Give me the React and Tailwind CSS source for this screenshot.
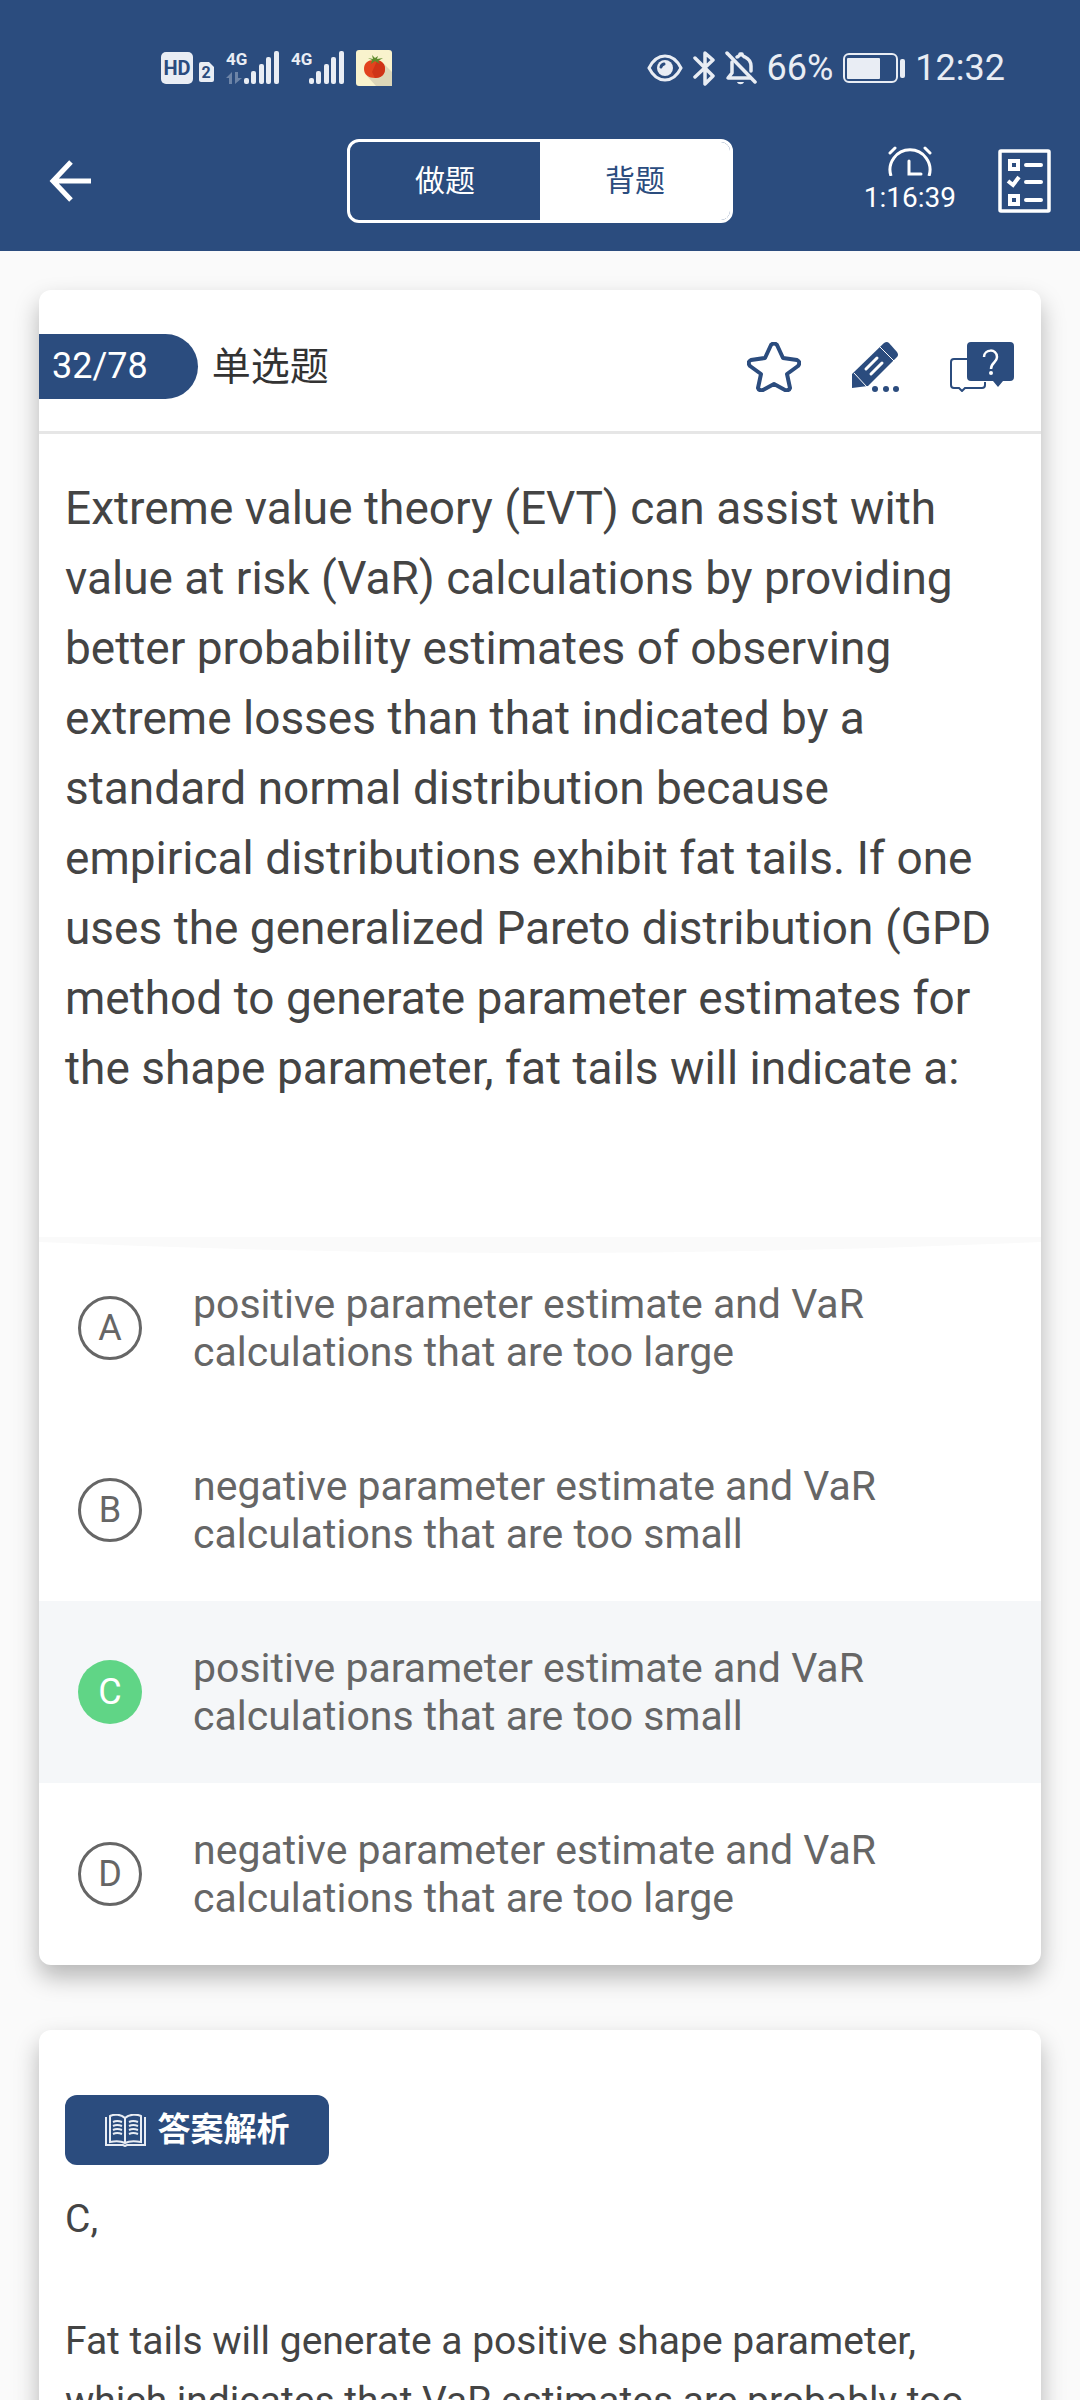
import React, { useState } from 'react'
import clsx from 'clsx'

// ─── Data ────────────────────────────────────────────────────────────────────

const MODES = ['做题', '背题']

const QUESTION = {
  index: 32,
  total: 78,
  type: '单选题',
  text: 'Extreme value theory (EVT) can assist with value at risk (VaR) calculations by providing better probability estimates of observing extreme losses than that indicated by a standard normal distribution because empirical distributions exhibit fat tails. If one uses the generalized Pareto distribution (GPD method to generate parameter estimates for the shape parameter, fat tails will indicate a:',
  options: [
    { key: 'A', text: 'positive parameter estimate and VaR calculations that are too large' },
    { key: 'B', text: 'negative parameter estimate and VaR calculations that are too small' },
    { key: 'C', text: 'positive parameter estimate and VaR calculations that are too small' },
    { key: 'D', text: 'negative parameter estimate and VaR calculations that are too large' },
  ],
  answer: 'C',
  explanation: 'Fat tails will generate a positive shape parameter, which indicates that VaR estimates are probably too',
}

// ─── Status bar icons ────────────────────────────────────────────────────────

function HdIcon() {
  return (
    <svg width="53" height="36" viewBox="0 0 53 36" className="fill-[#e9edf4]">
      <rect x="0" y="2" width="32" height="32" rx="5" />
      <text x="16" y="25" textAnchor="middle" className="fill-[#2b4c7e] font-bold text-[20px]">HD</text>
      <path d="M41 12h7l5 5v13a2 2 0 0 1-2 2H40a2 2 0 0 1-2-2V14a2 2 0 0 1 2-2z" />
      <text x="45" y="28" textAnchor="middle" className="fill-[#2b4c7e] font-bold text-[16px]">2</text>
    </svg>
  )
}

function SignalIcon({ data }) {
  return (
    <svg width="53" height="36" viewBox="0 0 53 36" className="fill-[#e9edf4]">
      <text x="0" y="15" className="font-bold text-[17px]">4G</text>
      {data && <path d="M0 28l6-6v12H3v-6zM9 22h3v6h4l-7 6z" opacity=".35" />}
      <rect x="18" y="28" width="5" height="6" rx="2" />
      <rect x="25" y="21" width="5" height="13" rx="2" />
      <rect x="33" y="14" width="5" height="20" rx="2" />
      <rect x="40" y="7" width="5" height="27" rx="2" />
      <rect x="48" y="1" width="5" height="33" rx="2" />
    </svg>
  )
}

function TomatoIcon() {
  return (
    <svg width="36" height="36" viewBox="0 0 36 36">
      <rect width="36" height="36" rx="3" fill="#f9f3cd" />
      <path d="M27 13l9 9v14H20l-9-10z" fill="#dcd6b8" />
      <path d="M18 10c6-1 11 3 11 9s-4 9-10 9S8 25 8 19s4-9 10-9z" fill="#e2431e" />
      <path d="M21 11c5 0 8 3 8 8s-4 9-10 9l-3-6z" fill="#cf3317" />
      <path d="M12 8l5 1-1-4 3 3 3-2-1 3 6-1-5 3 2 3-5-3-4 3 1-4z" fill="#5f8c2c" />
    </svg>
  )
}

function EyeIcon() {
  return (
    <svg width="36" height="36" viewBox="0 0 36 36" fill="none">
      <path d="M2 18C6 10 12 6 18 6s12 4 16 12c-4 8-10 12-16 12S6 26 2 18z" stroke="#e9edf4" strokeWidth="3" />
      <circle cx="18" cy="18" r="8" fill="#e9edf4" />
      <path d="M14 17a4 4 0 0 1 3-3" stroke="#2b4c7e" strokeWidth="3" strokeLinecap="round" />
    </svg>
  )
}

function BluetoothIcon() {
  return (
    <svg width="22" height="36" viewBox="0 0 22 36" fill="none" stroke="#e9edf4" strokeWidth="3.5" strokeLinejoin="round" strokeLinecap="round">
      <path d="M2 8l18 18-8 8V3l8 7L2 27" />
    </svg>
  )
}

function BellOffIcon() {
  return (
    <svg width="32" height="36" viewBox="0 0 32 36" fill="none" stroke="#e9edf4" strokeWidth="3.5" strokeLinecap="round">
      <path d="M7 12v11l-4 5h22M12 7c2-1 3-1 3-3h2c0 2 1 2 3 3 4 2 6 5 6 9v5" strokeLinejoin="round" />
      <path d="M2 3l28 29" />
      <path d="M12 32h7c-1 3-6 3-7 0z" fill="#e9edf4" stroke="none" />
    </svg>
  )
}

function BatteryIcon() {
  return (
    <svg width="62" height="36" viewBox="0 0 62 36">
      <rect x="1" y="4" width="53" height="28" rx="5" fill="none" stroke="#e9edf4" strokeWidth="2" />
      <rect x="4" y="8" width="33" height="21" rx="1" fill="#e9edf4" />
      <rect x="57" y="9" width="5" height="19" rx="2" fill="#e9edf4" />
    </svg>
  )
}

// ─── App icons ───────────────────────────────────────────────────────────────

function BackIcon() {
  return (
    <svg width="42" height="42" viewBox="0 0 42 42" fill="none" stroke="#fff" strokeWidth="5">
      <path d="M22 2L4 21l18 19M4 21h38" />
    </svg>
  )
}

function AlarmIcon() {
  return (
    <svg width="44" height="30" viewBox="0 0 44 30" fill="none" stroke="#fff" strokeWidth="3" strokeLinecap="round">
      <path d="M3 30A20 20 0 1 1 41 30" strokeLinecap="butt" />
      <path d="M21 15v13h12M2 7l5-5M42 7l-5-5" />
    </svg>
  )
}

function SheetIcon() {
  return (
    <svg width="53" height="64" viewBox="0 0 53 64" fill="none" stroke="#fff">
      <rect x="2" y="2" width="49" height="60" rx="1" strokeWidth="3.5" />
      <g strokeWidth="4">
        <rect x="12" y="12" width="8" height="8" />
        <rect x="12" y="47" width="8" height="8" />
      </g>
      <path d="M10 32l5 4 6-8" strokeWidth="4" />
      <path d="M28 16h15M28 33h15M28 51h15" strokeWidth="4" strokeLinecap="round" />
    </svg>
  )
}

function StarIcon() {
  return (
    <svg width="54" height="50" viewBox="0 0 54 50" fill="none" stroke="#2b4c7e" strokeWidth="4" strokeLinejoin="round">
      <path d="M24 3q3-3 6 0l6 13 14 2q4 2 1 6L40 32l3 14q-1 3-5 2L27 42l-11 6q-4 1-5-2l3-14L3 24q-3-4 1-6l14-2z" />
    </svg>
  )
}

function PencilIcon() {
  return (
    <svg width="47" height="50" viewBox="0 0 47 50" fill="#2b4c7e">
      <path d="M32 1q3-2 5 0l8 9q2 3 0 5L16 44 0 46V32z" />
      <path d="M28 5l14 14M2 31l13 14" stroke="#fff" strokeWidth="1" />
      <path d="M14 27l11-11M19 32l11-11" stroke="#fff" strokeWidth="3" strokeLinecap="round" />
      <circle cx="23" cy="47" r="3" />
      <circle cx="34" cy="47" r="3" />
      <circle cx="44" cy="47" r="3" />
    </svg>
  )
}

function ChatIcon() {
  return (
    <svg width="65" height="50" viewBox="0 0 65 50" fill="#2b4c7e">
      <path d="M17 17H4q-3 0-3 3v23q0 3 3 3h5l3 3 3-3h17q3 0 3-3v-3" fill="none" stroke="#2b4c7e" strokeWidth="2" />
      <path d="M21 0h39q4 0 4 4v31q0 4-4 4h-7l-5 6-5-6H21q-4 0-4-4V4q0-4 4-4z" />
      <path d="M34 15c0-8 13-9 13 0 0 6-6 5-6 12" fill="none" stroke="#fff" strokeWidth="2.5" />
      <circle cx="41" cy="31" r="2" fill="#fff" />
    </svg>
  )
}

function BookIcon() {
  return (
    <svg width="41" height="33" viewBox="0 0 41 33" fill="none" stroke="#e9edf4">
      <path d="M1 3v28h17l2 1 2-1h18V3" strokeWidth="2" />
      <path d="M20 4C16 0 9 0 5 2v26c5-1 11-1 15 1 4-2 10-2 16-1V2C32 0 24 0 20 4zv25" strokeWidth="2" />
      <path d="M8 8q4-2 9 0M8 12q4-2 9 0M8 16q4-2 9 0M8 20q4-2 9 0M24 8q4-2 9 0M24 12q4-2 9 0M24 16q4-2 9 0M24 20q4-2 9 0" strokeWidth="2" />
    </svg>
  )
}

// ─── Sections ────────────────────────────────────────────────────────────────

function StatusBar() {
  return (
    <div className="flex items-center justify-between pt-12 pr-[75px] pb-[51px] pl-[161px] text-4xl text-[#e9edf4]">
      <div className="flex items-center gap-3">
        <HdIcon />
        <SignalIcon data />
        <SignalIcon />
        <TomatoIcon />
      </div>
      <div className="flex items-center gap-[10px]">
        <EyeIcon />
        <BluetoothIcon />
        <BellOffIcon />
        <span>66%</span>
        <BatteryIcon />
        <span>12:32</span>
      </div>
    </div>
  )
}

function TopBar({ mode, onMode }) {
  return (
    <div className="grid grid-cols-[1fr_auto_1fr] items-center px-[29px] pb-7">
      <button type="button" aria-label="返回" className="justify-self-start px-5 py-2">
        <BackIcon />
      </button>
      <div className="flex h-[84px] w-[386px] overflow-hidden rounded-xl border-3 border-white text-3xl">
        {MODES.map((m, i) => (
          <button
            key={m}
            type="button"
            aria-pressed={i === mode}
            className={clsx('flex-1', i === mode ? 'bg-white text-[#2b4c7e]' : 'text-white')}
            onClick={() => onMode(i)}
          >
            {m}
          </button>
        ))}
      </div>
      <div className="flex items-center gap-[42px] justify-self-end">
        <div className="flex flex-col items-center text-[28px] leading-[36px] text-white">
          <AlarmIcon />
          <span className="mt-1">1:16:39</span>
        </div>
        <button type="button" aria-label="答题卡">
          <SheetIcon />
        </button>
      </div>
    </div>
  )
}

function Option({ option, selected, onSelect }) {
  return (
    <button
      type="button"
      aria-pressed={selected}
      onClick={onSelect}
      className={clsx(
        'flex w-full items-center gap-[51px] py-[43px] pr-[120px] pl-[39px] text-left',
        selected && 'bg-[#f5f7f9]',
      )}
    >
      <span
        className={clsx(
          'flex size-16 flex-none items-center justify-center rounded-full text-4xl',
          selected ? 'bg-[#60d586] text-white' : 'border-3 border-[#666] text-[#666]',
        )}
      >
        {option.key}
      </span>
      <span className="text-[41px] leading-[48px] text-[#666]">{option.text}</span>
    </button>
  )
}

// ─── Screen ──────────────────────────────────────────────────────────────────

export default function App() {
  const [mode, setMode] = useState(1)
  const [picked, setPicked] = useState(QUESTION.answer)

  return (
    <div className="flex h-screen flex-col overflow-hidden bg-[#fafafa] font-[Roboto,'Noto_Sans_CJK_SC',sans-serif]">
      <header className="flex-none bg-[#2b4c7e]">
        <StatusBar />
        <TopBar mode={mode} onMode={setMode} />
      </header>

      <main className="flex flex-1 flex-col gap-[65px] overflow-y-auto px-[39px] pt-[39px] [scrollbar-width:none]">
        {/* Question */}
        <section className="flex-none overflow-hidden rounded-xl bg-white shadow-[0_12px_24px_rgba(0,0,0,0.28)]">
          <div className="flex items-center border-b-3 border-[#e6e6e6] pt-11 pr-[26px] pb-8">
            <span className="rounded-r-full bg-[#2b4c7e] py-3 pr-[50px] pl-[13px] text-4xl leading-[41px] text-white">
              {QUESTION.index}/{QUESTION.total}
            </span>
            <h1 className="ml-[14px] text-[39px] leading-[48px] text-[#333]">{QUESTION.type}</h1>
            <div className="ml-auto flex items-center gap-[51px]">
              <button type="button" aria-label="收藏"><StarIcon /></button>
              <button type="button" aria-label="笔记"><PencilIcon /></button>
              <button type="button" aria-label="提问"><ChatIcon /></button>
            </div>
          </div>

          <p className="px-[26px] pt-[39px] pb-[134px] text-[46px] leading-[70px] text-[#444]">
            {QUESTION.text}
          </p>

          <div className="relative">
            <svg className="absolute inset-x-0 top-0 h-4 w-full" viewBox="0 0 1000 16" preserveAspectRatio="none">
              <path d="M0 0h1000v5Q500 27 0 5z" fill="#fafafa" />
            </svg>
            {QUESTION.options.map(o => (
              <Option key={o.key} option={o} selected={o.key === picked} onSelect={() => setPicked(o.key)} />
            ))}
          </div>
        </section>

        {/* Explanation */}
        <section className="flex-none rounded-xl bg-white px-[26px] pt-[65px] pb-16 shadow-[0_12px_24px_rgba(0,0,0,0.28)]">
          <h2 className="flex h-[70px] w-[264px] items-center justify-center gap-3 rounded-xl bg-[#2b4c7e] text-[33px] font-bold text-white">
            <BookIcon />
            答案解析
          </h2>
          <div className="mt-6 text-[39px] leading-[60px] text-[#444]">
            <p>{QUESTION.answer},</p>
            <p className="mt-[62px]">{QUESTION.explanation}</p>
          </div>
        </section>
      </main>
    </div>
  )
}
